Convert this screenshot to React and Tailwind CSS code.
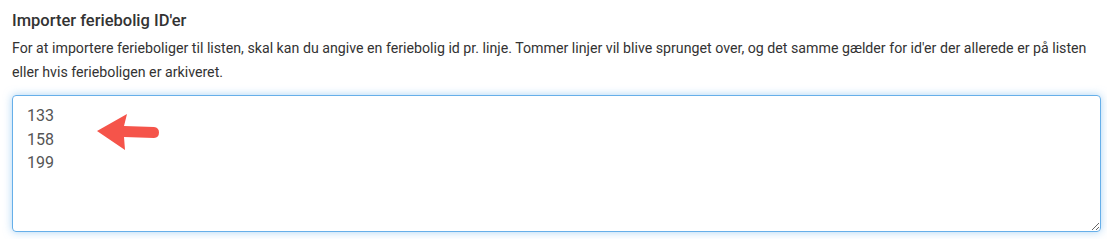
import React from 'react';

const Arrow = () => (
  <svg className="absolute left-[96px] top-[112px]" width="66" height="40" viewBox="0 0 66 40" fill="none">
    <path d="M1 19 L31 2 L28 14 L58 15 Q63 15.5 63 20.5 Q63 25.5 58 26 L28 25 L29 38 Z" fill="#f5544a" />
  </svg>
);

export default function App() {
  return (
    <div className="relative w-[1107px] h-[239px] bg-white px-3 pt-[10px] font-['Roboto',sans-serif] text-[#333]">
      <h3 className="text-[16.5px] font-medium leading-[22px] text-[#333]">Importer feriebolig ID'er</h3>
      <p className="mt-[4px] text-[14.2px] leading-[24px] text-[#333]">
        For at importere ferieboliger til listen, skal kan du angive en feriebolig id pr. linje. Tommer linjer vil blive sprunget over, og det samme gælder for id'er der allerede er på listen eller hvis ferieboligen er arkiveret.
      </p>
      <textarea
        defaultValue={'133\n158\n199'}
        className="mt-[11px] block w-[1089px] h-[137px] rounded-[4px] border border-[#66afe9] px-[14px] py-[8px] text-[16px] leading-[23.5px] text-[#555] outline-none shadow-[0_0_8px_rgba(102,175,233,0.55)] resize-y"
      />
      <Arrow />
    </div>
  );
}
